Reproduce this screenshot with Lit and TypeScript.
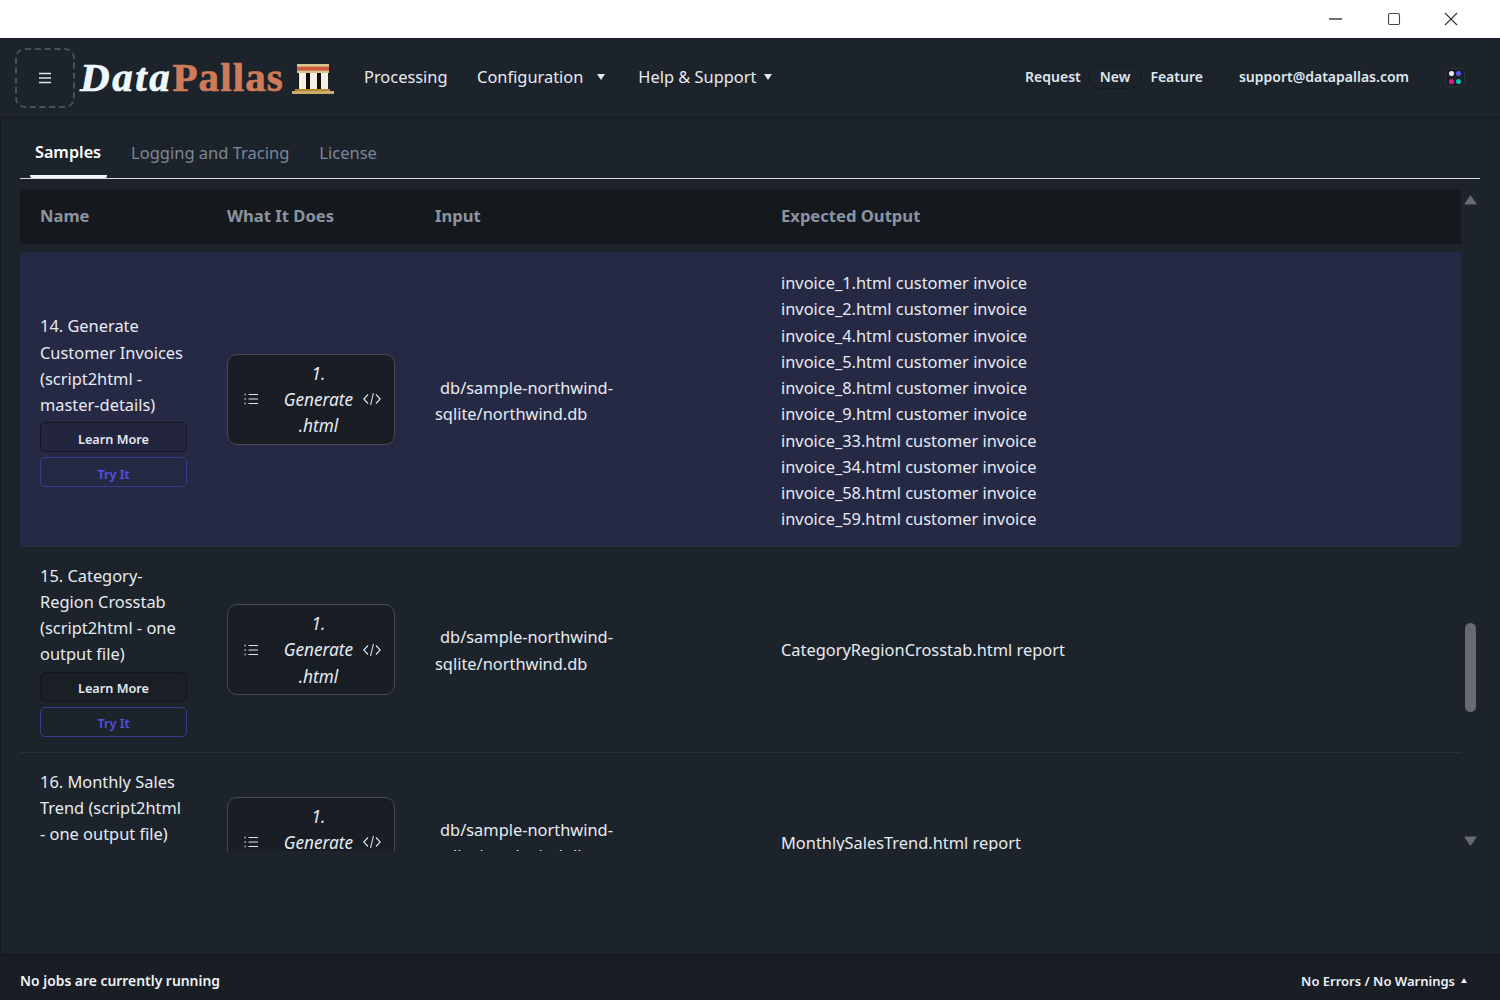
import { LitElement, html, css, svg } from "lit";
import { customElement } from "lit/decorators.js";

const FONT = css`"Noto Sans", "Open Sans", sans-serif`;

const rows = [
  {
    cls: "sel",
    name: ["14. Generate", "Customer Invoices", "(script2html -", "master-details)"],
    input: ["db/sample-northwind-", "sqlite/northwind.db"],
    out: [
      "invoice_1.html customer invoice",
      "invoice_2.html customer invoice",
      "invoice_4.html customer invoice",
      "invoice_5.html customer invoice",
      "invoice_8.html customer invoice",
      "invoice_9.html customer invoice",
      "invoice_33.html customer invoice",
      "invoice_34.html customer invoice",
      "invoice_58.html customer invoice",
      "invoice_59.html customer invoice",
    ],
  },
  {
    cls: "",
    name: ["15. Category-", "Region Crosstab", "(script2html - one", "output file)"],
    input: ["db/sample-northwind-", "sqlite/northwind.db"],
    out: ["CategoryRegionCrosstab.html report"],
  },
  {
    cls: "",
    name: ["16. Monthly Sales", "Trend (script2html", "- one output file)"],
    input: ["db/sample-northwind-", "sqlite/northwind.db"],
    out: ["MonthlySalesTrend.html report"],
  },
];

const listIcon = svg`<svg class="ic" width="16" height="16" viewBox="0 0 16 16" fill="none" stroke="currentColor" stroke-width="1.1"><path d="M5.5 3.5H15M5.5 8H15M5.5 12.5H15"/><path d="M1.5 3.5h1.2M1.5 8h1.2M1.5 12.5h1.2" stroke-width="1.4"/></svg>`;
const codeIcon = svg`<svg class="ic" width="18" height="14" viewBox="0 0 18 14" fill="none" stroke="currentColor" stroke-width="1.1"><path d="M5 2.5 0.8 7 5 11.5M13 2.5 17.2 7 13 11.5M10.4 1 7.6 13"/></svg>`;

@customElement("app-root")
export class AppRoot extends LitElement {
  static styles = css`
    :host { display: block; width: 1500px; height: 1000px; overflow: hidden; font-family: ${FONT}; color: #e6ebf2; background: #1d232a; }
    * { box-sizing: border-box; }
    .page { display: flex; flex-direction: column; height: 1000px; }
    .title { height: 38px; background: #fff; display: flex; justify-content: flex-end; align-items: center; flex: none; padding-right: 20px; }
    .winbtn { width: 57.5px; height: 38px; display: flex; align-items: center; justify-content: center; color: #333; }
    .nav { height: 80px; flex: none; display: flex; align-items: center; padding-left: 15px; border-bottom: 1px solid #15191e; background: #1d232a; }
    .burger { width: 60px; height: 60px; border: 2px dashed #4b5057; border-radius: 10px; display: flex; align-items: center; justify-content: center; color: #dfe5ec; flex: none; }
    .logo { margin-left: 5px; font-family: "Liberation Serif", serif; font-weight: 700; font-size: 41px; line-height: 1; display: flex; width: 204px; -webkit-text-stroke: 0.7px currentColor; }
    .logo i { color: #eef7fd; letter-spacing: 2.6px; }
    .logo b { color: #cf7b59; letter-spacing: 1.1px; }
    .temple { margin-left: 8px; margin-top: 3px; flex: none; }
    .menu { display: flex; align-items: center; font-size: 16.4px; color: #e6ebf2; margin-left: 30px; padding-bottom: 2px; }
    .menu span { white-space: nowrap; }
    .m2 { margin-left: 29.5px; }
    .m3 { margin-left: 33px; }
    .caret { width: 0; height: 0; border-left: 4px solid transparent; border-right: 4px solid transparent; border-top: 6px solid #e6ebf2; margin-left: 14px; }
    .caret.near { margin-left: 8px; }
    .right { margin-left: auto; display: flex; align-items: center; font-size: 14px; font-weight: 600; color: #dfe6ee; padding-bottom: 2px; }
    .pill { border: 1px solid #171b20; border-radius: 12px; padding: 0 11px; margin: 0 8px 0 7px; height: 24px; display: flex; align-items: center; }
    .mail { margin-left: 36px; }
    .dots { width: 20px; height: 19px; border: 1px solid #2c3138; border-radius: 4px; margin: 2px 35px 0 36px; display: grid; grid-template-columns: 5px 5px; grid-auto-rows: 5px; gap: 3px 2px; justify-content: center; align-content: center; background: #1a1f26; }
    .dots u { display: block; border-radius: 50%; }
    .d1 { background: #e8edf5; }
    .d2 { background: #5a55f0; }
    .d3 { background: #f0148c; }
    .d4 { background: #00c9a7; }
    .main { flex: 1; border-left: 1px solid #15191e; padding: 0 20px 0 19px; min-height: 0; }
    .tabs { height: 61px; display: flex; align-items: flex-end; border-bottom: 1px solid #d9d9d9; font-size: 16.5px; color: #7c8799; }
    .tab { height: 46px; padding: 0 5px 3px; margin-right: 20px; display: flex; align-items: center; border-bottom: 3px solid transparent; white-space: nowrap; }
    .tab.on { color: #fff; font-weight: 600; font-size: 16.2px; border-bottom-color: #f4f7fb; border-radius: 2px; margin-left: 10px; width: 77px; margin-right: 19px; }
    .body { display: flex; margin-top: 10px; height: 662px; }
    .table { flex: 1; overflow: hidden; min-width: 0; }
    .row { display: grid; grid-template-columns: 187px 208px 346px 1fr; align-items: center; padding-left: 20px; font-size: 16.4px; line-height: 26.25px; }
    .head { height: 55px; background: #15191e; font-weight: 700; color: #8b94a1; font-size: 16.6px; margin-bottom: 8px; }
    .data { padding-top: 16px; padding-bottom: 15px; border-bottom: 1px solid #2a3037; color: #e6ebf2; white-space: nowrap; }
    .data.sel { background: #262944; }
    .name { display: flex; flex-direction: column; }
    .sel .name { margin-top: 1px; margin-bottom: -1px; }
    .btn { width: 147px; height: 30px; border-radius: 5px; font-size: 12.7px; font-weight: 600; display: flex; align-items: center; justify-content: center; line-height: 1; padding-top: 4px; }
    .learn { margin-top: 4px; background: rgba(10, 12, 18, 0.12); border: 1px solid #14171c; color: #e3e8ee; }
    .try { margin-top: 5px; border: 1px solid #3a3a8c; color: #5450e6; }
    .gen { width: 168px; height: 91px; border: 1px solid #464b52; border-radius: 10px; background: #191e24; display: flex; align-items: center; padding: 0 13px 0 15px; }
    .gen em { flex: 1; text-align: center; font-style: italic; font-size: 17.2px; padding: 2px 0 0 15px; }
    .ic { flex: none; color: #dfe5ec; }
    .input, .out { margin-top: 1px; margin-bottom: -1px; }
    .sel .input, .sel .out { margin-top: 2px; margin-bottom: -2px; }
    .input { padding-right: 10px; }
    .input span { display: block; }
    .input span:first-child { padding-left: 5px; }
    .bar { width: 19px; flex: none; display: flex; flex-direction: column; align-items: center; }
    .up { margin-top: 6px; display: block; }
    .thumb { margin-top: 418px; width: 11px; height: 89px; border-radius: 6px; background: #676b70; }
    .down { margin-top: 124px; display: block; }
    .status { height: 46px; flex: none; background: #191e24; border-top: 1px solid #15191e; display: flex; align-items: center; justify-content: space-between; padding: 6px 33px 0 20px; font-size: 13.9px; font-weight: 600; color: #eef2f6; }
    .sright { display: flex; align-items: center; font-size: 13px; }
    .tri { width: 0; height: 0; border-left: 3.5px solid transparent; border-right: 3.5px solid transparent; border-bottom: 5px solid #eef2f6; margin-left: 6px; }
  `;

  private temple() {
    return svg`<svg class="temple" width="42" height="30" viewBox="0 0 42 30">
      <rect x="5" y="0" width="32" height="9" fill="#d9c594"/>
      <rect x="5" y="2.7" width="32" height="4" fill="#cc5c3c"/>
      <rect x="6" y="9" width="30" height="16" fill="#0f0f10"/>
      <rect x="7" y="9" width="7" height="16" fill="#f7efe2"/>
      <rect x="18" y="9" width="7" height="16" fill="#f7efe2"/>
      <rect x="29" y="9" width="7" height="16" fill="#f7efe2"/>
      <rect x="3" y="25" width="35" height="2" fill="#b8862f"/>
      <rect x="0" y="27" width="42" height="3" fill="#c9ad6a"/>
    </svg>`;
  }

  render() {
    return html`<div class="page">
      <div class="title">
        <div class="winbtn"><svg width="14" height="14" viewBox="0 0 14 14"><path d="M0 7h13" stroke="#333" stroke-width="1.4"/></svg></div>
        <div class="winbtn"><svg width="14" height="14" viewBox="0 0 14 14" fill="none"><rect x="1.5" y="1.5" width="11" height="11" rx="1.5" stroke="#444" stroke-width="1.1"/></svg></div>
        <div class="winbtn"><svg width="14" height="14" viewBox="0 0 14 14" fill="none"><path d="M1 1l12 12M13 1 1 13" stroke="#333" stroke-width="1.1"/></svg></div>
      </div>
      <div class="nav">
        <div class="burger"><svg width="14" height="12" viewBox="0 0 14 12" fill="none" stroke="currentColor" stroke-width="1.3"><path d="M1 1.5h12M1 6h12M1 10.5h12"/></svg></div>
        <div class="logo"><i>Data</i><b>Pallas</b></div>
        ${this.temple()}
        <div class="menu">
          <span>Processing</span>
          <span class="m2">Configuration</span><div class="caret"></div>
          <span class="m3">Help &amp; Support</span><div class="caret near"></div>
        </div>
        <div class="right">
          <span>Request</span><span class="pill">New</span><span>Feature</span>
          <span class="mail">support@datapallas.com</span>
          <span class="dots"><u class="d1"></u><u class="d2"></u><u class="d3"></u><u class="d4"></u></span>
        </div>
      </div>
      <div class="main">
        <div class="tabs">
          <div class="tab on">Samples</div>
          <div class="tab">Logging and Tracing</div>
          <div class="tab">License</div>
        </div>
        <div class="body">
          <div class="table">
            <div class="row head"><div>Name</div><div>What It Does</div><div>Input</div><div>Expected Output</div></div>
            ${rows.map((r) => html`<div class="row data ${r.cls}">
              <div class="name">
                ${r.name.map((n) => html`<div>${n}</div>`)}
                <div class="btn learn">Learn More</div>
                <div class="btn try">Try It</div>
              </div>
              <div><div class="gen">${listIcon}<em>1.<br />Generate<br />.html</em>${codeIcon}</div></div>
              <div class="input">${r.input.map((i) => html`<span>${i}</span>`)}</div>
              <div class="out">${r.out.map((o) => html`<div>${o}</div>`)}</div>
            </div>`)}
          </div>
          <div class="bar">
            <svg class="up" width="13" height="10" viewBox="0 0 13 10"><path d="M6.5 1.2 1.2 8.8h10.6z" fill="#676b70" stroke="#676b70" stroke-width="1.4" stroke-linejoin="round"/></svg>
            <div class="thumb"></div>
            <svg class="down" width="13" height="10" viewBox="0 0 13 10"><path d="M6.5 8.8 1.2 1.2h10.6z" fill="#676b70" stroke="#676b70" stroke-width="1.4" stroke-linejoin="round"/></svg>
          </div>
        </div>
      </div>
      <div class="status"><span>No jobs are currently running</span><span class="sright">No Errors / No Warnings<span class="tri"></span></span></div>
    </div>`;
  }
}
